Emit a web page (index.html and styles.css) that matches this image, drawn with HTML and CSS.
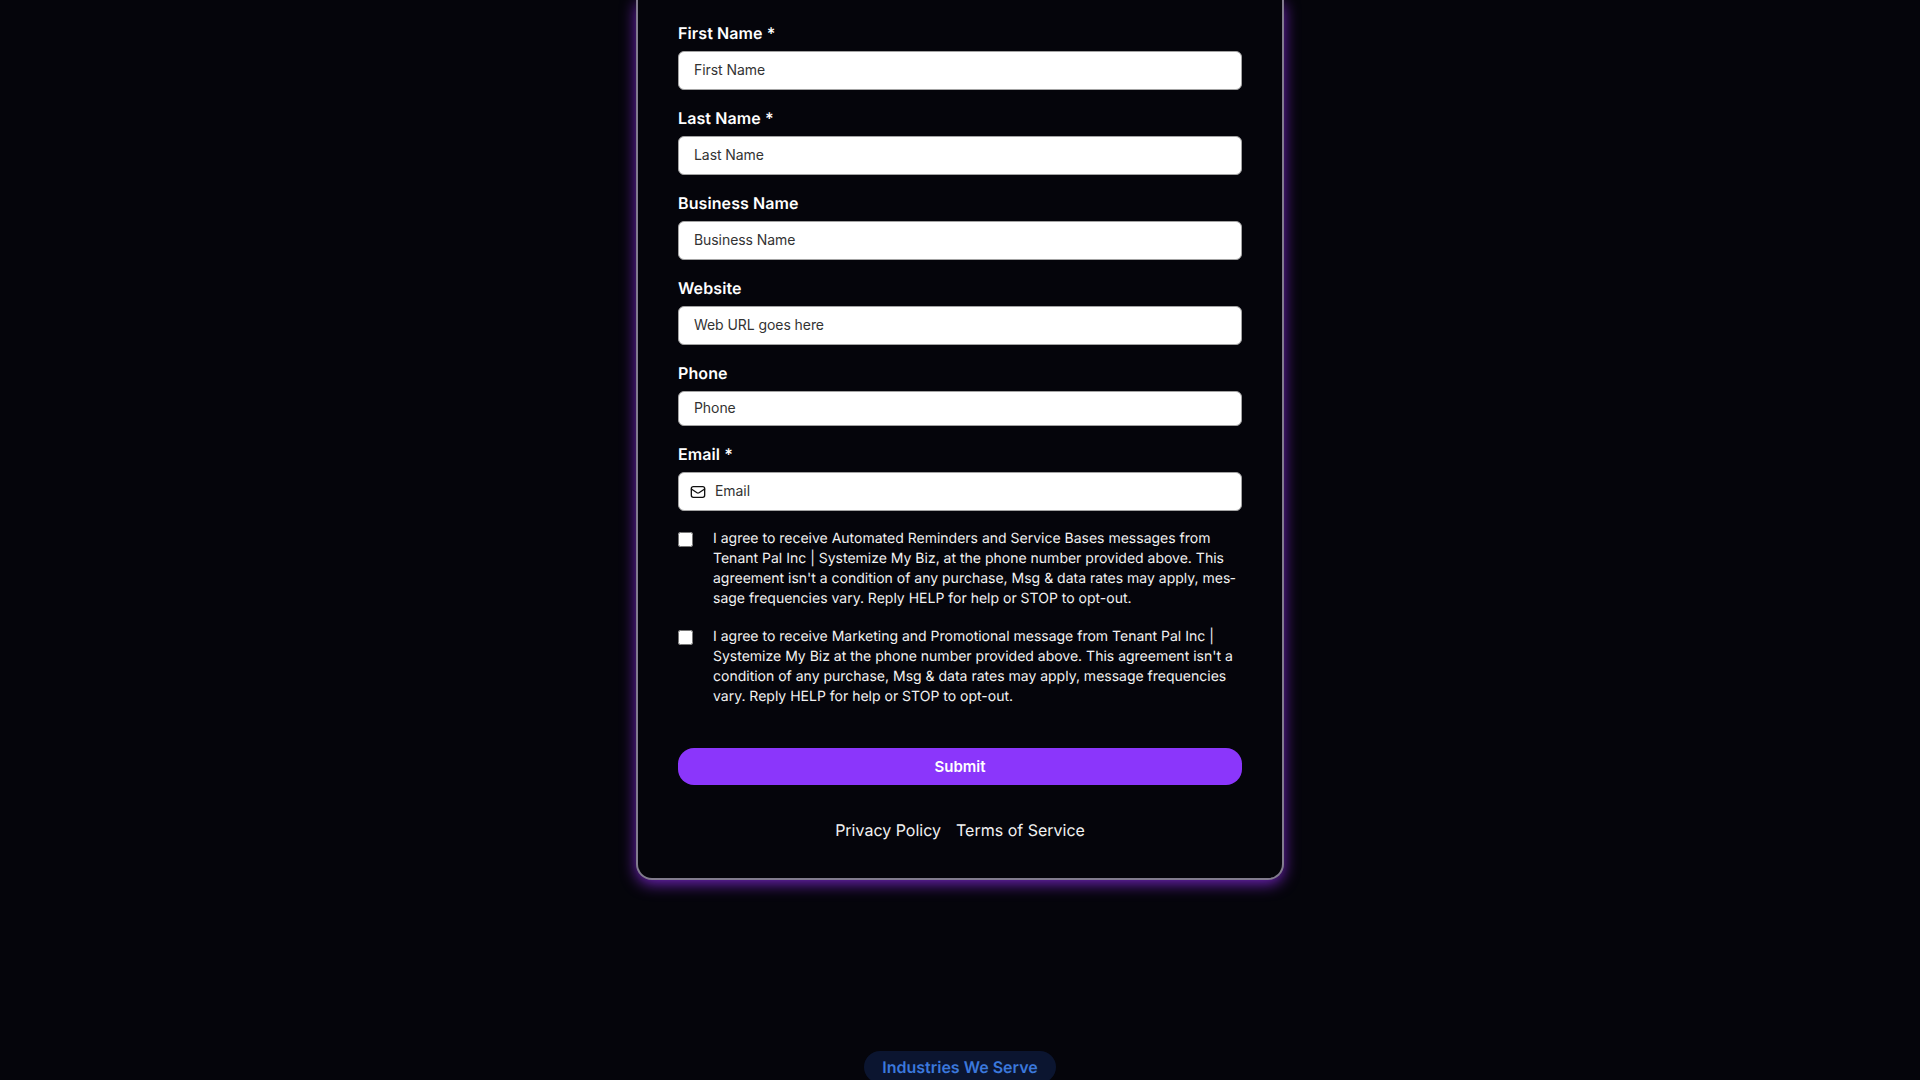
FILE: index.html
```html
<!DOCTYPE html>
<html lang="en">
<head>
    <meta charset="UTF-8">
    <meta name="viewport" content="width=device-width, initial-scale=1.0">
    <title>Contact form</title>
    <link rel="stylesheet" href="styles.css">
</head>
<body>

    <div class="wrapper">
        <!-- form card, top edge is scrolled off -->
        <form class="card">
            <div class="field">
                <label class="field-label">First Name *</label>
                <input class="field-input" type="text" placeholder="First Name">
            </div>
            <div class="field">
                <label class="field-label">Last Name *</label>
                <input class="field-input" type="text" placeholder="Last Name">
            </div>
            <div class="field">
                <label class="field-label">Business Name</label>
                <input class="field-input" type="text" placeholder="Business Name">
            </div>
            <div class="field">
                <label class="field-label">Website</label>
                <input class="field-input" type="text" placeholder="Web URL goes here">
            </div>
            <div class="field">
                <label class="field-label">Phone</label>
                <input class="field-input field-input-short" type="text" placeholder="Phone">
            </div>
            <div class="field field-last">
                <label class="field-label">Email *</label>
                <div class="input-icon">
                    <svg class="icon-mail" viewBox="0 0 24 24" fill="none" stroke="currentColor" stroke-width="2" stroke-linecap="round" stroke-linejoin="round">
                        <rect x="2" y="4" width="20" height="16" rx="3"/>
                        <path d="M22 7.5l-8.5 5.6a2.8 2.8 0 0 1-3 0L2 7.5"/>
                    </svg>
                    <input class="field-input field-input-email" type="text" placeholder="Email">
                </div>
            </div>

            <!-- consent -->
            <div class="consent">
                <input class="consent-box" type="checkbox">
                <p class="consent-text">I agree to receive Automated Reminders and Service Bases messages from Tenant Pal Inc | Systemize My Biz, at the phone number provided above. This agreement isn't a condition of any purchase, Msg &amp; data rates may apply, mes&shy;sage frequencies vary. Reply HELP for help or STOP to opt-out.</p>
            </div>
            <div class="consent">
                <input class="consent-box" type="checkbox">
                <p class="consent-text">I agree to receive Marketing and Promotional message from Tenant Pal Inc | Systemize My Biz at the phone number provided above. This agreement isn't a condition of any purchase, Msg &amp; data rates may apply, message frequencies vary. Reply HELP for help or STOP to opt-out.</p>
            </div>

            <button class="btn-submit" type="button">Submit</button>

            <div class="links">
                <a href="#">Privacy Policy</a>
                <a href="#">Terms of Service</a>
            </div>
        </form>

        <div class="section-head">
            <span class="pill">Industries We Serve</span>
        </div>
    </div>

</body>
</html>
```

FILE: styles.css
```css
* {
    box-sizing: border-box;
}
html, body {
    height: 100%;
}
body {
    margin: 0;
    overflow: hidden;
    background-color: #05050b;
    color: #fff;
    font-family: Inter, "Liberation Sans", sans-serif;
    text-rendering: geometricPrecision;
}
.wrapper {
    height: 1080px;
    overflow: hidden;
}
.card {
    width: 648px;
    margin: 0 auto;
    padding: 21px 40px 36px;
    border: 2px solid #827c8e;
    border-top: 0;
    border-radius: 0 0 16px 16px;
    background-color: #05050b;
    box-shadow: 0 4px 15px rgba(138, 43, 226, 0.8);
}
.field {
    margin-bottom: 16px;
}
.field-last {
    margin-bottom: 17px;
}
.field-label {
    display: block;
    margin-bottom: 6px;
    font-size: 16px;
    font-weight: 600;
    line-height: 24px;
    letter-spacing: 0.1px;
}
.field-input {
    display: block;
    width: 100%;
    height: 39px;
    padding: 0 15px 2px;
    border: 1px solid #a3a3a3;
    border-radius: 6px;
    background-color: #fff;
    font-family: inherit;
    font-size: 14px;
    letter-spacing: -0.07px;
    color: #111;
    outline: none;
}
.field-input::placeholder {
    color: #333;
    opacity: 1;
}
.field-input-short {
    height: 35px;
}
.input-icon {
    position: relative;
}
.icon-mail {
    position: absolute;
    left: 12px;
    top: 12px;
    width: 16px;
    height: 16px;
    color: #111;
}
.field-input-email {
    padding-left: 36px;
}
.consent {
    display: flex;
    gap: 20px;
    margin-bottom: 17px;
}
.consent-box {
    flex: none;
    width: 15px;
    height: 15px;
    margin: 4px 0 0;
}
.consent-text {
    margin: 1px 0 0;
    font-size: 14px;
    line-height: 20px;
    color: #f2f2f2;
}
.btn-submit {
    display: block;
    width: 100%;
    height: 37px;
    margin-top: 41px;
    border: 0;
    border-radius: 16px;
    background-color: #8b36fb;
    font-family: inherit;
    font-size: 15px;
    font-weight: 600;
    color: #fff;
    cursor: pointer;
}
.links {
    display: flex;
    justify-content: center;
    gap: 15px;
    margin-top: 33px;
    font-size: 16px;
    line-height: 24px;
}
.links a {
    color: #f2f2f2;
    text-decoration: none;
}
.section-head {
    display: flex;
    justify-content: center;
    margin-top: 171px;
}
.pill {
    padding: 4px 18px;
    border-radius: 999px;
    background-color: #0b1530;
    font-size: 16px;
    font-weight: 600;
    line-height: 24px;
    color: #3b78dc;
}
```
